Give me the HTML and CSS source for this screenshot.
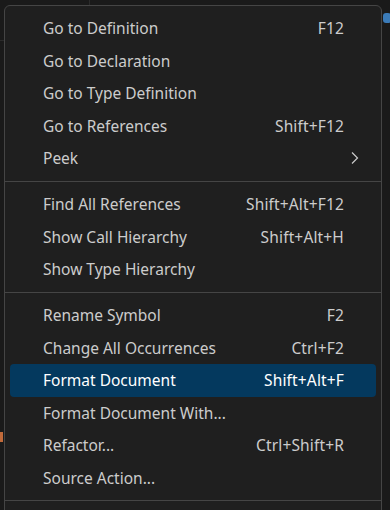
FILE: index.html
```html
<!DOCTYPE html>
<html lang="en">
<head>
    <meta charset="UTF-8">
    <title>Context Menu</title>
    <link rel="stylesheet" href="styles.css">
</head>
<body>
    <div class="editor">
        <div class="tab-line line-a"></div>
        <div class="tab-line line-b"></div>
        <div class="gutter-mark"></div>
        <div class="py-icon"></div>
    </div>

    <div class="context-menu">
        <div class="menu-item"><span class="label">Go to Definition</span><span class="keys">F12</span></div>
        <div class="menu-item"><span class="label">Go to Declaration</span></div>
        <div class="menu-item"><span class="label">Go to Type Definition</span></div>
        <div class="menu-item"><span class="label">Go to References</span><span class="keys">Shift+F12</span></div>
        <div class="menu-item submenu"><span class="label">Peek</span>
            <svg class="chevron" width="10" height="14" viewBox="0 0 10 14"><path d="M2 1.5 L7.5 7 L2 12.5" fill="none" stroke="#cccccc" stroke-width="1.2"/></svg>
        </div>
        <div class="separator"></div>
        <div class="menu-item"><span class="label">Find All References</span><span class="keys">Shift+Alt+F12</span></div>
        <div class="menu-item"><span class="label">Show Call Hierarchy</span><span class="keys">Shift+Alt+H</span></div>
        <div class="menu-item"><span class="label">Show Type Hierarchy</span></div>
        <div class="separator"></div>
        <div class="menu-item"><span class="label">Rename Symbol</span><span class="keys">F2</span></div>
        <div class="menu-item"><span class="label">Change All Occurrences</span><span class="keys">Ctrl+F2</span></div>
        <div class="menu-item active"><span class="label">Format Document</span><span class="keys">Shift+Alt+F</span></div>
        <div class="menu-item"><span class="label">Format Document With...</span></div>
        <div class="menu-item"><span class="label">Refactor...</span><span class="keys">Ctrl+Shift+R</span></div>
        <div class="menu-item"><span class="label">Source Action...</span></div>
        <div class="separator"></div>
        <div class="menu-rest"></div>
    </div>
</body>
</html>
```

FILE: styles.css
```css
* {
    margin: 0;
    padding: 0;
    box-sizing: border-box;
}
body {
    background-color: #1a1a1a;
    font-family: "Noto Sans", "Open Sans", sans-serif;
    width: 390px;
    height: 510px;
    overflow: hidden;
    position: relative;
}
.editor {
    position: absolute;
    inset: 0;
}
.tab-line {
    position: absolute;
    background-color: #2b2b2b;
}
.line-a {
    left: 89px;
    top: 0;
    width: 1px;
    height: 6px;
}
.line-b {
    left: 0;
    top: 40px;
    width: 4px;
    height: 1px;
}
.gutter-mark {
    position: absolute;
    left: 0;
    top: 432px;
    width: 3px;
    height: 10px;
    background-color: #c16a3a;
}
.py-icon {
    position: absolute;
    left: 383px;
    top: 13px;
    width: 8px;
    height: 10px;
    border-radius: 3px;
    background-color: #3b7bb8;
}
.context-menu {
    position: absolute;
    left: 4px;
    top: 5px;
    width: 378px;
    background-color: #1f1f1f;
    border: 1px solid #454545;
    border-radius: 6px;
    padding: 6px 4px;
    color: #cccccc;
}
.menu-item {
    display: flex;
    align-items: center;
    height: 32.5px;
    padding: 0 32px 0 33px;
    margin: 0 1px;
    border-radius: 4px;
    font-size: 15.5px;
}
.menu-item .label {
    flex: 1;
}
.menu-item .keys {
    white-space: nowrap;
    letter-spacing: 0.15px;
}
.menu-item.active {
    background-color: #04395e;
    color: #ffffff;
}
.submenu .chevron {
    margin-right: -16px;
}
.separator {
    height: 1px;
    background-color: #454545;
    margin: 6px -4px 6.5px;
}
.menu-rest {
    height: 20px;
}
```
